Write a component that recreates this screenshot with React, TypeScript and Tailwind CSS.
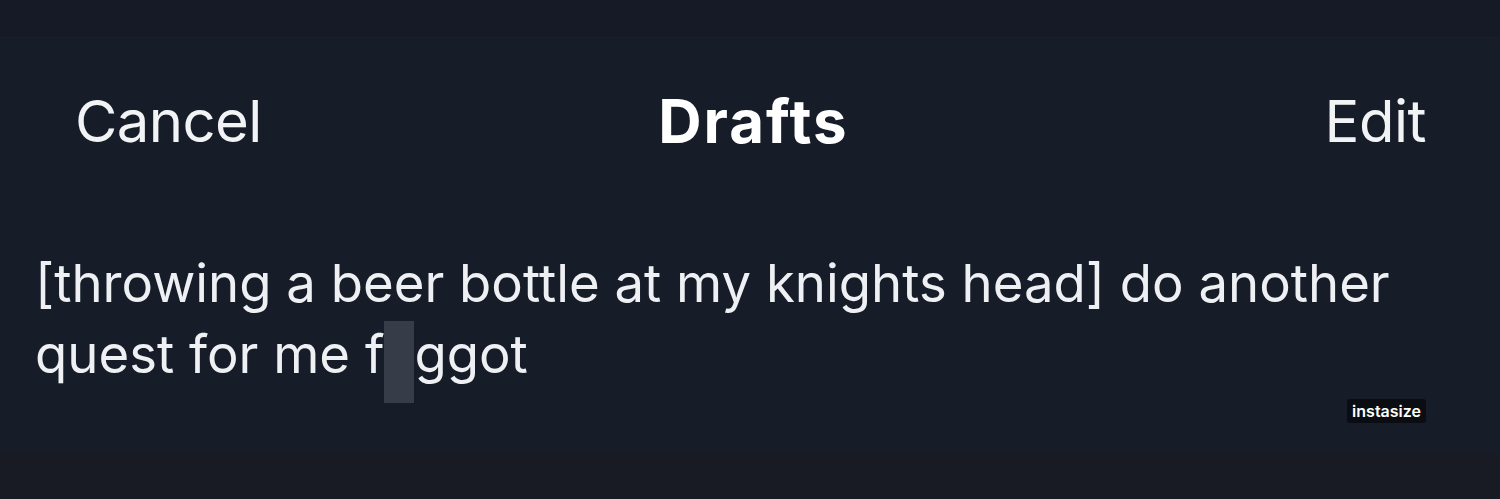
export default function App() {
  return (
    <div className="w-[1500px] h-[499px] bg-[#161c28] flex flex-col overflow-hidden" style={{ fontFamily: 'Inter, Roboto, "Liberation Sans", sans-serif' }}>
      <div className="h-[38px] bg-[#151a26] border-b border-[#1b1d28]" />
      <div className="grid grid-cols-[1fr_auto_1fr] items-center pl-[75px] pr-[74px] pt-[44px] h-[122px]">
        <span className="justify-self-start text-[58px] leading-none text-[#f2f3f5] tracking-[-0.6px]">Cancel</span>
        <span className="text-[60px] leading-none font-bold text-white tracking-[2px] translate-x-[3px]">Drafts</span>
        <span className="justify-self-end text-[58px] leading-none text-[#f2f3f5] tracking-[-0.5px]">Edit</span>
      </div>
      <div className="pl-[35px] pt-[88px] text-[52.7px] leading-[71px] text-[#eef0f3]">
        <div>[throwing a beer bottle at my knights head] do another</div>
        <div className="flex items-center h-[71px]">
          <span>quest for me f</span>
          <span className="inline-block w-[30px] h-[82px] bg-[#373d48] translate-y-[7px]" />
          <span>ggot</span>
        </div>
      </div>
      <div className="flex justify-end pr-[74px] pt-[9px]">
        <span className="bg-[#0b0d12] text-white text-[16px] font-semibold px-[5px] h-[24px] leading-[24px] rounded-[3px]" style={{ fontFamily: 'Inter, sans-serif' }}>instasize</span>
      </div>
      <div className="flex-1" />
      <div className="h-[48px] bg-[#181a24]" />
    </div>
  );
}
